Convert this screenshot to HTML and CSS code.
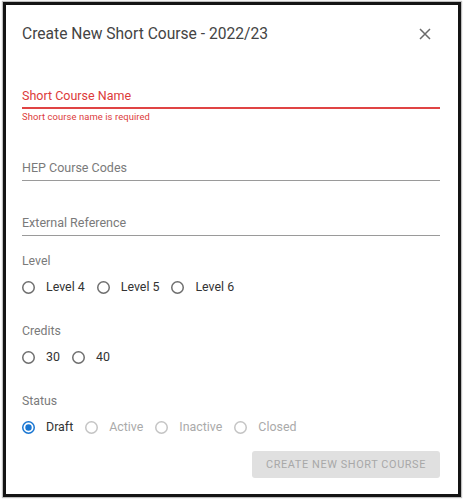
FILE: index.html
```html
<!DOCTYPE html>
<html lang="en">
<head>
<meta charset="utf-8">
<title>Create New Short Course</title>
<link rel="stylesheet" href="styles.css">
</head>
<body>
<div class="dialog">
  <div class="header">
    <h1 class="title">Create New Short Course - 2022/23</h1>
    <svg class="close" width="12" height="12" viewBox="0 0 12 12" aria-label="Close">
      <path d="M1 1 L11 11 M11 1 L1 11" stroke="#6b6b6b" stroke-width="1.5" fill="none"/>
    </svg>
  </div>

  <div class="field error first">
    <span class="field-label">Short Course Name</span>
  </div>
  <div class="helper">Short course name is required</div>

  <div class="field second">
    <span class="field-label">HEP Course Codes</span>
  </div>

  <div class="field third">
    <span class="field-label">External Reference</span>
  </div>

  <div class="group first-group">
    <div class="group-label">Level</div>
    <div class="radios">
      <label class="radio"><svg class="circle" width="13" height="13" viewBox="0 0 13 13"><circle cx="6.5" cy="6.5" r="5.75" fill="none" stroke="#6e6e6e" stroke-width="1.5"/></svg><span>Level 4</span></label>
      <label class="radio"><svg class="circle" width="13" height="13" viewBox="0 0 13 13"><circle cx="6.5" cy="6.5" r="5.75" fill="none" stroke="#6e6e6e" stroke-width="1.5"/></svg><span>Level 5</span></label>
      <label class="radio"><svg class="circle" width="13" height="13" viewBox="0 0 13 13"><circle cx="6.5" cy="6.5" r="5.75" fill="none" stroke="#6e6e6e" stroke-width="1.5"/></svg><span>Level 6</span></label>
    </div>
  </div>

  <div class="group">
    <div class="group-label">Credits</div>
    <div class="radios">
      <label class="radio"><svg class="circle" width="13" height="13" viewBox="0 0 13 13"><circle cx="6.5" cy="6.5" r="5.75" fill="none" stroke="#6e6e6e" stroke-width="1.5"/></svg><span>30</span></label>
      <label class="radio"><svg class="circle" width="13" height="13" viewBox="0 0 13 13"><circle cx="6.5" cy="6.5" r="5.75" fill="none" stroke="#6e6e6e" stroke-width="1.5"/></svg><span>40</span></label>
    </div>
  </div>

  <div class="group">
    <div class="group-label">Status</div>
    <div class="radios">
      <label class="radio"><svg class="circle" width="13" height="13" viewBox="0 0 13 13"><circle cx="6.5" cy="6.5" r="5.75" fill="none" stroke="#1976d2" stroke-width="1.5"/><circle cx="6.5" cy="6.5" r="3.2" fill="#1976d2"/></svg><span>Draft</span></label>
      <label class="radio disabled"><svg class="circle" width="13" height="13" viewBox="0 0 13 13"><circle cx="6.5" cy="6.5" r="5.75" fill="none" stroke="#c4c4c4" stroke-width="1.5"/></svg><span>Active</span></label>
      <label class="radio disabled"><svg class="circle" width="13" height="13" viewBox="0 0 13 13"><circle cx="6.5" cy="6.5" r="5.75" fill="none" stroke="#c4c4c4" stroke-width="1.5"/></svg><span>Inactive</span></label>
      <label class="radio disabled"><svg class="circle" width="13" height="13" viewBox="0 0 13 13"><circle cx="6.5" cy="6.5" r="5.75" fill="none" stroke="#c4c4c4" stroke-width="1.5"/></svg><span>Closed</span></label>
    </div>
  </div>

  <div class="actions">
    <button class="submit" disabled>Create New Short Course</button>
  </div>
</div>
</body>
</html>
```

FILE: styles.css
```css
* { box-sizing: border-box; }

html, body {
  margin: 0;
  padding: 0;
  background: #ffffff;
}

body {
  font-family: Roboto, "Liberation Sans", Arial, sans-serif;
  width: 465px;
  height: 500px;
  overflow: hidden;
}

.dialog {
  margin: 2px 0 0 3px;
  width: 458px;
  height: 495px;
  border: 3px solid #141414;
  box-shadow: 0 0 1px 1px rgba(0, 0, 0, 0.25);
  padding: 19px 18px 0 16px;
  display: flex;
  flex-direction: column;
  background: #fff;
}

.header {
  display: flex;
  align-items: center;
  justify-content: space-between;
  height: 20px;
}

.title {
  margin: 0;
  font-size: 15.6px;
  line-height: 20px;
  font-weight: 400;
  color: #444;
}

.close {
  margin-right: 9px;
  display: block;
}

.field {
  padding-bottom: 4px;
  border-bottom: 1px solid #9a9a9a;
}

.field.error {
  padding-bottom: 3px;
  border-bottom: 2px solid #e04444;
}

.field-label {
  display: block;
  font-size: 12.5px;
  line-height: 16px;
  color: #7a7a7a;
}

.field.error .field-label {
  color: #dc3a3a;
}

.first { margin-top: 44px; }

.helper {
  margin-top: 2px;
  font-size: 9.4px;
  line-height: 12px;
  color: #dc3a3a;
  letter-spacing: 0.1px;
}

.second { margin-top: 37px; }
.third { margin-top: 34px; }

.group {
  margin-top: 24px;
  display: flex;
  flex-direction: column;
  gap: 6px;
}

.group.first-group { margin-top: 17px; }

.group-label {
  font-size: 12.3px;
  line-height: 16px;
  color: #7a7a7a;
}

.radios {
  display: flex;
  align-items: center;
  height: 24px;
  gap: 12px;
}

.radio {
  display: flex;
  align-items: center;
  gap: 11px;
  font-size: 12.4px;
  line-height: 16px;
  color: #333;
}

.radio.disabled {
  color: #aaa;
}

.circle {
  display: block;
  flex: none;
}

.actions {
  margin-top: 12px;
  display: flex;
  justify-content: flex-end;
}

.submit {
  height: 27px;
  padding: 0 12px;
  border: none;
  border-radius: 3px;
  background: #e0e0e0;
  color: #a8a8a8;
  font-family: Roboto, "Liberation Sans", Arial, sans-serif;
  font-size: 10.9px;
  font-weight: 400;
  letter-spacing: 0.6px;
  text-transform: uppercase;
  width: 188px;
}
```
